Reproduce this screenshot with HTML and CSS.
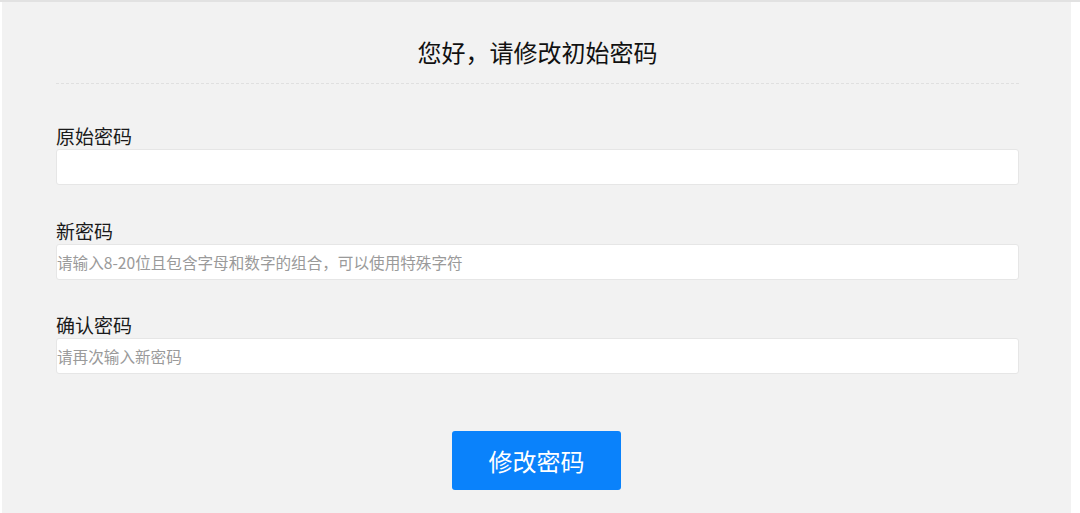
FILE: index.html
```html
<!DOCTYPE html>
<html lang="zh-CN">
<head>
    <meta charset="UTF-8">
    <meta name="viewport" content="width=device-width, initial-scale=1.0">
    <title>修改初始密码</title>
    <link rel="stylesheet" href="styles.css">
</head>
<body>

<div class="top-line"></div>

<div class="panel">
    <h1 class="title">您好，请修改初始密码</h1>

    <form class="pwd-form" action="#" method="post">
        <!-- 原始密码 -->
        <div class="field">
            <label for="old_pwd">原始密码</label>
            <input class="input-field" id="old_pwd" type="password" name="old_pwd">
        </div>

        <!-- 新密码 -->
        <div class="field">
            <label for="new_pwd">新密码</label>
            <input class="input-field" id="new_pwd" type="password" name="new_pwd" placeholder="请输入8-20位且包含字母和数字的组合，可以使用特殊字符">
        </div>

        <!-- 确认密码 -->
        <div class="field">
            <label for="confirm_pwd">确认密码</label>
            <input class="input-field" id="confirm_pwd" type="password" name="confirm_pwd" placeholder="请再次输入新密码">
        </div>

        <div class="btn-row">
            <button class="submit-btn" type="submit">修改密码</button>
        </div>
    </form>
</div>

</body>
</html>
```

FILE: styles.css
```css
html, body {
    height: 100%;
}
body {
    font-family: 'Noto Sans CJK SC', 'Noto Sans', sans-serif;
    background: #fff;
    color: #222;
    margin: 0;
    padding: 0;
    display: flex;
    flex-direction: column;
}
.top-line {
    height: 2px;
    background: #e2e2e2;
}
.panel {
    flex: 1;
    width: 1069px;
    margin-left: 2px;
    background: #f2f2f2;
    padding: 34px 52px 0 54px;
    box-sizing: border-box;
}
.title {
    margin: 0;
    font-size: 24px;
    font-weight: normal;
    line-height: 32px;
    text-align: center;
    color: #111;
    padding-bottom: 15px;
    border-bottom: 1px dashed #e0e0e0;
}
.pwd-form {
    padding-top: 40px;
}
.field {
    display: flex;
    flex-direction: column;
    margin-bottom: 33.5px;
}
.field label {
    font-size: 19px;
    line-height: 24px;
    color: #1a1a1a;
}
.input-field {
    height: 36px;
    box-sizing: border-box;
    margin-top: 1px;
    padding: 0;
    border: 1px solid #e6e6e6;
    border-radius: 3px;
    background: #fff;
    font-family: inherit;
    font-size: 15.6px;
    color: #333;
}
.input-field:focus {
    outline: none;
    border-color: #0a82fb;
}
.input-field::placeholder {
    color: #9a9a9a;
}
.btn-row {
    display: flex;
    justify-content: center;
    padding-top: 23.5px;
    padding-right: 2px;
}
.submit-btn {
    width: 169px;
    height: 59px;
    border: none;
    border-radius: 3px;
    background-color: #0a82fb;
    color: #fff;
    font-family: inherit;
    font-size: 24px;
    cursor: pointer;
}
.submit-btn:hover {
    background-color: #0670dc;
}
```
